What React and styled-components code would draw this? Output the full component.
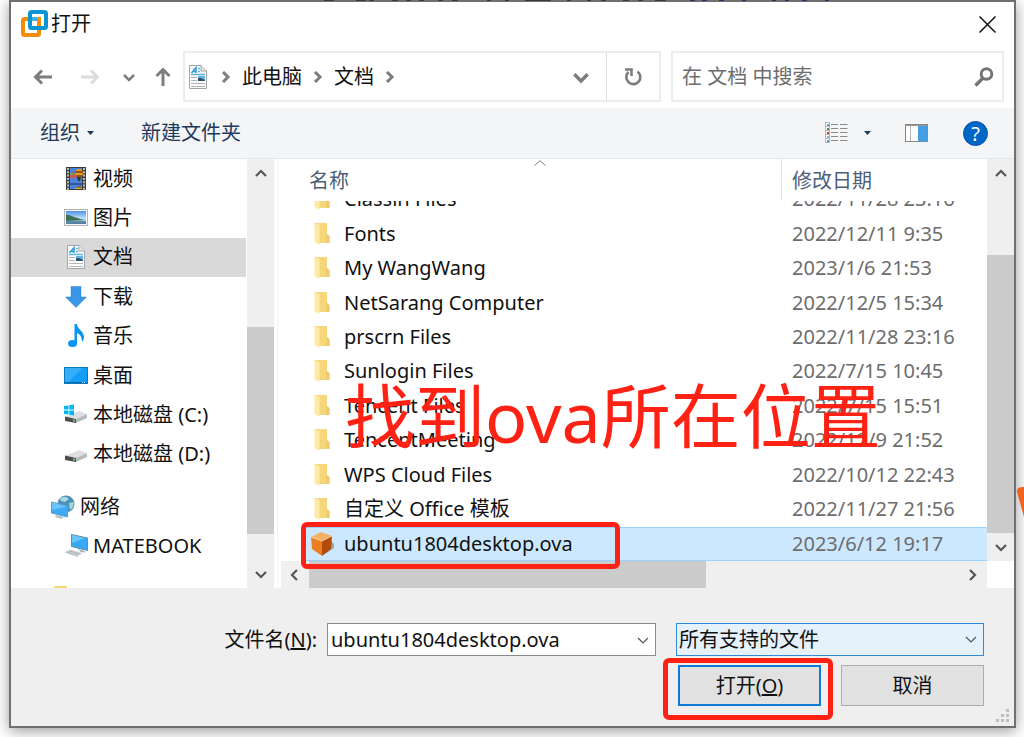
import React, { useState } from 'react'
import styled, { createGlobalStyle, css } from 'styled-components'

const GlobalStyle = createGlobalStyle`
  * {
    box-sizing: border-box;
  }
  body {
    margin: 0;
    background: #fff;
    color: #111;
    font-family: 'Noto Sans', 'Noto Sans CJK SC', sans-serif;
    font-size: 20px;
    line-height: 28px;
  }
  button, input, select {
    font: inherit;
    color: inherit;
  }
  button {
    padding: 0;
    border: 0;
    background: none;
    cursor: pointer;
  }
  svg {
    display: block;
    flex: none;
  }
`

const Page = styled.div`
  position: relative;
  display: flex;
  min-height: 100vh;
  padding: 0 8px 9px 9px;
  overflow: hidden;
`

const EdgeMark = styled.svg`
  position: absolute;
  right: 0;
  top: 486px;
`

const TopMarks = styled.svg`
  position: absolute;
  left: 310px;
  top: 0;
`

const Dialog = styled.main`
  flex: 1;
  display: flex;
  flex-direction: column;
  min-width: 0;
  border: 2px solid #707070;
  background: #fff;
  box-shadow: 0 3px 14px rgba(0, 0, 0, 0.4);
`

const TitleBar = styled.header`
  display: flex;
  align-items: center;
  gap: 3px;
  height: 44px;
  padding: 0 18px 0 10px;
`

const Title = styled.h1`
  flex: 1;
  margin: 0;
  font-size: 20px;
  font-weight: 400;
`

const NavBar = styled.div`
  display: flex;
  align-items: center;
  height: 62px;
  padding: 5px 10px 6px 0;
`

const NavButtons = styled.nav`
  display: flex;
  align-items: center;
  width: 172px;
  padding-left: 22px;
`

const NavButton = styled.button`
  margin-left: ${props => props.$before || 0}px;
  color: ${props => (props.disabled ? '#dcdcdc' : '#7d7d7d')};
`

const AddressBar = styled.div`
  flex: 1;
  display: flex;
  align-items: center;
  min-width: 0;
  height: 51px;
  border: 2px solid #ececec;
`

const Crumbs = styled.div`
  flex: 1;
  display: flex;
  align-items: center;
  padding: 0 17px 0 1px;
  color: #7d7d7d;
  > :first-child {
    margin-right: 10px;
  }
`

const Crumb = styled.button`
  margin: 0 10px;
  color: #111;
`

const Spacer = styled.span`
  flex: 1;
`

const Refresh = styled.button`
  display: flex;
  align-items: center;
  justify-content: center;
  width: 53px;
  height: 47px;
  border-left: 1px solid #dedede;
  color: #7d7d7d;
`

const SearchBox = styled.label`
  flex: 0 1 333px;
  display: flex;
  align-items: center;
  min-width: 0;
  height: 51px;
  margin-left: 10px;
  padding: 0 8px 0 9px;
  border: 2px solid #ececec;
  color: #747474;
  input {
    flex: 1;
    min-width: 0;
    padding: 0;
    border: 0;
    outline: 0;
    background: none;
  }
  input::placeholder {
    color: #6d6d6d;
    opacity: 1;
  }
`

const Toolbar = styled.div`
  display: flex;
  align-items: center;
  height: 51px;
  padding: 0 26px 0 29px;
  border-bottom: 1px solid #e4e8ea;
  background: #f4f5f7;
  color: #1e395b;
`

const ToolButton = styled.button`
  display: flex;
  align-items: center;
  gap: ${props => props.$gap || 0}px;
  margin-left: ${props => props.$before || 0}px;
`

const Body = styled.div`
  flex: 1;
  display: flex;
  min-height: 0;
`

const Tree = styled.nav`
  display: flex;
  flex-direction: column;
  width: 236px;
  overflow: hidden;
`

const TreeGroup = styled.ul`
  display: grid;
  grid-auto-rows: 1fr;
  flex: none;
  height: ${props => props.$height}px;
  margin: 0 0 13px;
  padding: 0;
  list-style: none;
`

const TreeItem = styled.li`
  display: flex;
  margin-right: 1px;
  background: ${props => (props.$selected ? '#d9d9d9' : 'transparent')};
`

const TreeLink = styled.a`
  flex: 1;
  display: flex;
  align-items: center;
  gap: 5px;
  padding-left: ${props => (props.$level === 1 ? 40 : 53)}px;
  color: inherit;
  text-decoration: none;
`

const TreeFolder = styled.div`
  flex: 1;
  width: 13px;
  min-height: 0;
  margin: 7px 0 0 43px;
  background: #f5d77b;
`

const ScrollBar = styled.div`
  display: flex;
  flex: none;
  background: #efefef;
  color: #555;
  ${props =>
    props.$horizontal
      ? css`
          height: 27px;
        `
      : css`
          flex-direction: column;
          width: 27px;
        `}
`

const ScrollArrow = styled.button`
  display: flex;
  align-items: center;
  justify-content: center;
  flex: none;
  width: 28px;
  height: 28px;
`

const ScrollGap = styled.div`
  flex: ${props => props.$size};
`

const ScrollThumb = styled.div`
  flex: ${props => props.$size};
  background: #cbcbcb;
`

const Splitter = styled.div`
  width: 7px;
  border-left: 3px solid #fff;
  background: linear-gradient(to right, #f5f5f5 1px, #fff 1px);
`

const Listing = styled.section`
  position: relative;
  flex: 1;
  display: flex;
  flex-direction: column;
  min-width: 0;
`

const ListArea = styled.div`
  flex: 1;
  display: flex;
  min-height: 0;
`

const Files = styled.table`
  flex: 1;
  display: block;
  min-width: 0;
  margin-left: 22px;
`

const FilesHead = styled.thead`
  position: relative;
  z-index: 1;
  display: block;
  background: #fff;
  color: #4c607a;
`

// the first row is scrolled half under the header
const FilesBody = styled.tbody`
  display: grid;
  grid-auto-rows: 1fr;
  height: 379px;
  margin-top: -19px;
`

const rowColumns = css`
  display: grid;
  grid-template-columns: 1fr 206px;
`

const HeadRow = styled.tr`
  ${rowColumns}
  height: 42px;
`

const HeadCell = styled.th`
  position: relative;
  padding: 8px 0 0 ${props => (props.$divided ? 10 : 6)}px;
  border-left: ${props => (props.$divided ? '1px solid #e5e5e5' : '0')};
  font-weight: 400;
  text-align: left;
`

const SortMark = styled.svg`
  position: absolute;
  left: calc(50% - 8px);
  top: 1px;
`

const FileRow = styled.tr`
  ${rowColumns}
  position: relative;
  align-items: center;
  ${props =>
    props.$selected &&
    css`
      background: #cce8ff;
      box-shadow: inset 0 1px #99d1ff, inset 0 -1px #99d1ff;
    `}
`

const NameCell = styled.td`
  display: flex;
  align-items: center;
  gap: 10px;
  padding: 0 0 0 7px;
`

const DateCell = styled.td`
  padding: 0 0 0 11px;
  color: #6d6d6d;
`

const Corner = styled.div`
  width: 27px;
  background: #fff;
`

const ScrollRow = styled.div`
  display: flex;
  height: 27px;
  > :first-child {
    flex: 1;
  }
`

const Note = styled.p`
  position: absolute;
  z-index: 2;
  left: 64px;
  top: 207px;
  margin: 0;
  color: #ff2113;
  font-size: 70px;
  line-height: 100px;
  white-space: nowrap;
  pointer-events: none;
`

const Marker = styled.span`
  position: absolute;
  z-index: 2;
  top: ${props => props.$top}px;
  left: ${props => props.$left}px;
  width: ${props => props.$width}px;
  height: ${props => props.$height}px;
  border: 5px solid #ff2113;
  border-radius: 6px;
  pointer-events: none;
`

const Footer = styled.form`
  position: relative;
  height: 138px;
  padding: 35px 30px 0 0;
  background: #efefef;
`

const Fields = styled.div`
  display: flex;
  align-items: center;
  justify-content: flex-end;
`

const FieldLabel = styled.label`
  margin-right: 10px;
`

const Combo = styled.div`
  display: flex;
  align-items: center;
  width: 329px;
  height: 33px;
  margin-right: 20px;
  padding: 0 6px 0 3px;
  border: 1px solid #8c8c8c;
  background: #fff;
  input {
    flex: 1;
    min-width: 0;
    padding: 0;
    border: 0;
    outline: 0;
    background: none;
  }
  button {
    color: #555;
  }
`

const SelectWrap = styled.div`
  position: relative;
  width: 308px;
  height: 33px;
  svg {
    position: absolute;
    right: 7px;
    top: 10px;
    color: #555;
    pointer-events: none;
  }
`

const Select = styled.select`
  width: 100%;
  height: 33px;
  padding: 0 24px 0 2px;
  border: 1px solid #2f8ad8;
  border-radius: 0;
  outline: 0;
  background: #e5f1fb;
  appearance: none;
`

const Actions = styled.div`
  display: flex;
  justify-content: flex-end;
  gap: 20px;
  margin-top: 9px;
`

const ActionButton = styled.button`
  position: relative;
  width: 143px;
  height: 41px;
  border: ${props => (props.$primary ? '2px solid #0f7ad6' : '1px solid #adadad')};
  background: #e1e1e1;
`

const Grip = styled.svg`
  position: absolute;
  right: 4px;
  bottom: 3px;
`

const HelpBadge = styled.span`
  display: block;
  width: 25px;
  height: 25px;
  border: 1px solid #07519c;
  border-radius: 50%;
  background: #0067c8;
  color: #fff;
  line-height: 23px;
  text-align: center;
`

const chevrons = {
  up: 'M1 7 L6 2 L11 7',
  down: 'M1 2 L6 7 L11 2',
  left: 'M8 1 L3 6 L8 11',
  right: 'M3 1 L8 6 L3 11',
}

const Chevron = ({ dir, size = 12, weight = 2 }) => (
  <svg
    width={size}
    height={size}
    viewBox={dir === 'up' || dir === 'down' ? '0 -2 12 12' : '0 0 12 12'}
    fill="none"
    stroke="currentColor"
    strokeWidth={weight}
    aria-hidden="true"
  >
    <path d={chevrons[dir]} />
  </svg>
)

const Caret = () => (
  <svg width="7" height="4" viewBox="0 0 7 4" aria-hidden="true">
    <path d="M0 0H7L3.5 4Z" fill="#1e395b" />
  </svg>
)

const Arrow = ({ rotate = 0 }) => (
  <svg width="20" height="20" viewBox="0 0 20 20" fill="none" stroke="currentColor" strokeWidth="3" aria-hidden="true">
    <g transform={`rotate(${rotate} 10 10)`}>
      <path d="M19 10H3M9 3.5L2.5 10L9 16.5" />
    </g>
  </svg>
)

const AppLogo = () => (
  <svg width="27" height="28" viewBox="0 0 27 28" fill="none" strokeWidth="4" aria-hidden="true">
    <rect x="2" y="9" width="16" height="16" rx="1.5" stroke="#f48c06" />
    <rect x="9" y="2" width="16" height="16" rx="1.5" stroke="#0c95d3" />
    <path d="M11 9h7v5" stroke="#f48c06" />
    <path d="M9 5v11" stroke="#0c95d3" />
    <path d="M11 9h5" stroke="#3cb1e2" />
  </svg>
)

const DocIcon = () => (
  <svg width="24" height="24" viewBox="0 0 24 24" aria-hidden="true">
    <path d="M3.5 .5H15L20.5 6V23.5H3.5Z" fill="#fbfbfb" stroke="#a3a5a6" />
    <path d="M15 .5V6H20.5" fill="#e3e5e6" stroke="#a3a5a6" />
    <path d="M5.500 8L10 2.500V8M7.500 6.500H10" fill="none" stroke="#2f9bd6" strokeWidth="1.500" />
    <path d="M12 3.5H14M12 6.500H14M5 9.500H19" stroke="#5bb5e4" strokeWidth="1.500" />
    <path d="M5 12.500H11M5 15.500H11M5 18.500H19M5 21.500H19" stroke="#b2b5b7" />
    <rect x="12" y="11" width="7" height="5" fill="#64b2ea" />
    <path d="M12 16V13L15 13L19 15V16Z" fill="#2f5365" />
  </svg>
)

const VideoIcon = () => (
  <svg width="24" height="24" viewBox="0 0 24 24" aria-hidden="true">
    <rect x="2" y="0" width="20" height="23" fill="#3d3d3d" />
    <rect x="6" y="1" width="12" height="21" fill="#4b83dc" />
    <path d="M4 1V23M20 1V23" stroke="#e6e6e6" strokeWidth="1.5" strokeDasharray="2 1.3" />
    <path d="M6 6l3-1 3 3-1 3H6Z" fill="#d4574b" />
    <path d="M6 7h3" stroke="#55b159" strokeWidth="2" />
    <ellipse cx="15" cy="6" rx="4" ry="4" fill="#d7a31c" />
    <path d="M11 5h8M12 9h6" stroke="#9b2a20" strokeWidth="1.5" />
    <path d="M13 10h4l-1 4h-2Z" fill="#2e3c28" />
    <path d="M6 17H18" stroke="#1b2f57" />
    <path d="M11 22a4 4 0 0 1 7 0Z" fill="#e2b31d" />
    <path d="M13 20h4" stroke="#9b2a20" />
  </svg>
)

const PictureIcon = () => (
  <svg width="24" height="24" viewBox="0 0 24 24" aria-hidden="true">
    <defs>
      <linearGradient id="sky" x2="0" y2="1">
        <stop offset="0" stopColor="#4f93e6" />
        <stop offset=".6" stopColor="#c6e5f7" />
        <stop offset="1" stopColor="#5b93bb" />
      </linearGradient>
    </defs>
    <rect x=".5" y="3.5" width="23" height="16" fill="#f5f5f5" stroke="#b4b4b4" />
    <rect x="2" y="5" width="20" height="13" fill="url(#sky)" />
    <path d="M2 9C6 8 9 12 21 14L2 15Z" fill="#3f6f54" />
    <path d="M2 15H22V18H2Z" fill="#426f8d" opacity=".6" />
  </svg>
)

const DownloadIcon = () => (
  <svg width="24" height="24" viewBox="0 0 24 24" aria-hidden="true">
    <path d="M7 1.5H17V12H22.5L12 22.5L1.5 12H7Z" fill="#3a97e8" stroke="#2d83d0" strokeWidth=".5" />
  </svg>
)

const MusicIcon = () => (
  <svg width="24" height="24" viewBox="0 0 24 24" aria-hidden="true">
    <ellipse cx="8.5" cy="19.5" rx="4.5" ry="3.5" fill="#0a97f2" />
    <path d="M10.5 0H13C13 5 20 7 20 13C20 15 19 17 18 18C18 13 16 10 13 9V19H10.5Z" fill="#0a97f2" />
  </svg>
)

const DesktopIcon = () => (
  <svg width="24" height="24" viewBox="0 0 24 24" aria-hidden="true">
    <rect x=".5" y="3.5" width="23" height="16" fill="#149df7" stroke="#0879bd" />
    <path d="M1 4H18L5 18H1Z" fill="#37acf9" />
    <path d="M1 18.5H23" stroke="#0a6ba8" />
    <path d="M18 18.5H22" stroke="#d5ebf8" strokeDasharray="1 1" />
  </svg>
)

const DiskIcon = ({ system }) => (
  <svg width="24" height="24" viewBox="0 0 24 24" aria-hidden="true">
    <path d="M1 14L15 8L23 11L12 16Z" fill="#dedfe2" />
    <path d="M12 16L23 11V15L12 20Z" fill="#b9babd" />
    <path d="M1 13.5L12 16V20L1 18Z" fill="#4c4d50" />
    <path d="M9 17.5h2" stroke="#5de15d" strokeWidth="2" />
    {system && (
      <path
        d="M0 3L4.5 2.4V6.6H0ZM5.3 2.3L10 1.6V6.6H5.3ZM0 7.4H4.5V11.6L0 11ZM5.3 7.4H10V12.4L5.3 11.7Z"
        fill="#00b5f0"
      />
    )}
  </svg>
)

const NetworkIcon = () => (
  <svg width="24" height="24" viewBox="0 0 24 24" aria-hidden="true">
    <circle cx="15" cy="9" r="8.5" fill="#4c91b4" />
    <path d="M9 4C12 0 17 2 18 4L14 7L10 6ZM18 8L23 7L22 12L19 15Z" fill="#a6d6e6" />
    <path d="M.5 7L16.5 11V22L.5 18Z" fill="#3daaf5" stroke="#5f9fc4" />
    <path d="M1 7.5L16 11.5L1 15Z" fill="#6bc4fb" />
    <path d="M5 20L13 22L10 24L4 22Z" fill="#b8c0c5" />
  </svg>
)

const ComputerIcon = () => (
  <svg width="24" height="24" viewBox="0 0 24 24" aria-hidden="true">
    <path d="M7.5 .5L23.5 4V16.5L7.5 12.5Z" fill="#36a8f5" stroke="#6a8ca3" />
    <path d="M8 1L21 4L8 9Z" fill="#6bc3fa" />
    <path d="M14 15L20 17L22 18.5L17 18Z" fill="#a1a8ad" />
    <path d="M6 15.5L19 19L13 23L0 18.5Z" fill="#d3d8db" />
    <path d="M3 18L14 21.5M5 16.8L16 20" stroke="#98a0a5" strokeDasharray="1.5 .7" />
  </svg>
)

const FolderIcon = () => (
  <svg width="24" height="24" viewBox="0 0 24 24" aria-hidden="true">
    <path d="M4.5 1H17V12L19.5 14V21H8Z" fill="#f6d67a" />
    <path d="M16 12L19.5 14V21H16Z" fill="#eecb6c" />
    <path d="M4.5 1L9.5 3V23L4.5 20Z" fill="#ffe9a6" />
  </svg>
)

const BoxIcon = () => (
  <svg width="24" height="24" viewBox="0 0 24 24" aria-hidden="true">
    <path d="M15 22L24 16V12L20 8Z" fill="#7b746d" opacity=".6" />
    <path d="M1 5L11 0L22 4L12 9Z" fill="#f5b063" />
    <path d="M1 5L12 9V24L2 17Z" fill="#eb7f1f" />
    <path d="M12 9L22 4L21 17L12 24Z" fill="#b44b0d" />
    <path d="M1 5L12 9L22 4" stroke="#ffd9a4" strokeWidth=".8" fill="none" />
  </svg>
)

const RefreshIcon = () => (
  <svg width="18" height="20" viewBox="0 0 18 20" fill="none" stroke="currentColor" aria-hidden="true">
    <path d="M13.5 4.5A7 7 0 1 1 4.500 5" strokeWidth="2.6" />
    <path d="M1 2.5H7.500V9" strokeWidth="2.6" />
  </svg>
)

const SearchIcon = () => (
  <svg width="20" height="20" viewBox="0 0 20 20" fill="none" stroke="currentColor" aria-hidden="true">
    <circle cx="12.5" cy="7" r="5.3" strokeWidth="3" />
    <path d="M9 11L1.5 18.5" strokeWidth="3.4" />
  </svg>
)

const CloseIcon = () => (
  <svg width="17" height="17" viewBox="0 0 17 17" stroke="#111" strokeWidth="1.5" aria-hidden="true">
    <path d="M.5 .5L16.5 16.5M16.5 .5L.5 16.5" />
  </svg>
)

const DetailsIcon = () => (
  <svg width="23" height="22" viewBox="0 0 23 22" aria-hidden="true">
    {['#4f9fd6', '#5b8a3c', '#d33a2c', '#8fb8d0', '#3d9bd8'].map((color, i) => (
      <g key={i} transform={`translate(0 ${i * 4})`}>
        <rect x=".5" y=".5" width="4" height="4" fill="#fff" stroke="#b6b6b6" />
        <rect x="2" y="2" width="2" height="2" fill={color} />
        <path d="M6 2.5H13M15 2.5H22.5" stroke="#8b8b8b" />
      </g>
    ))}
  </svg>
)

const PreviewIcon = () => (
  <svg width="23" height="18" viewBox="0 0 23 18" aria-hidden="true">
    <rect x=".5" y=".5" width="22" height="17" fill="#fff" stroke="#858585" />
    <path d="M1 1.5H22" stroke="#999" />
    <path d="M5.5 2V17" stroke="#b5b5b5" />
    <rect x="13" y="2" width="9.5" height="15.5" fill="#459fe3" />
  </svg>
)

const drives = [
  { name: '视频', icon: <VideoIcon /> },
  { name: '图片', icon: <PictureIcon /> },
  { name: '文档', icon: <DocIcon /> },
  { name: '下载', icon: <DownloadIcon /> },
  { name: '音乐', icon: <MusicIcon /> },
  { name: '桌面', icon: <DesktopIcon /> },
  { name: '本地磁盘 (C:)', icon: <DiskIcon system /> },
  { name: '本地磁盘 (D:)', icon: <DiskIcon /> },
]

const network = [
  { name: '网络', icon: <NetworkIcon />, level: 1 },
  { name: 'MATEBOOK', icon: <ComputerIcon /> },
]

const files = [
  { name: 'Classin Files', date: '2022/11/28 23:16' },
  { name: 'Fonts', date: '2022/12/11 9:35' },
  { name: 'My WangWang', date: '2023/1/6 21:53' },
  { name: 'NetSarang Computer', date: '2022/12/5 15:34' },
  { name: 'prscrn Files', date: '2022/11/28 23:16' },
  { name: 'Sunlogin Files', date: '2022/7/15 10:45' },
  { name: 'Tencent Files', date: '2022/7/15 15:51' },
  { name: 'TencentMeeting', date: '2022/12/9 21:52' },
  { name: 'WPS Cloud Files', date: '2022/10/12 22:43' },
  { name: '自定义 Office 模板', date: '2022/11/27 21:56' },
  { name: 'ubuntu1804desktop.ova', date: '2023/6/12 19:17', image: true },
]

const TreeList = ({ items, height, selected, onSelect }) => (
  <TreeGroup $height={height}>
    {items.map(item => (
      <TreeItem key={item.name} $selected={item.name === selected}>
        <TreeLink
          href="#"
          $level={item.level}
          onClick={e => {
            e.preventDefault()
            onSelect(item.name)
          }}
        >
          {item.icon}
          {item.name}
        </TreeLink>
      </TreeItem>
    ))}
  </TreeGroup>
)

const Scroll = ({ horizontal, before, thumb, after }) => (
  <ScrollBar $horizontal={horizontal}>
    <ScrollArrow type="button" aria-label={horizontal ? '向左' : '向上'}>
      <Chevron dir={horizontal ? 'left' : 'up'} weight={2.2} />
    </ScrollArrow>
    <ScrollGap $size={before} />
    <ScrollThumb $size={thumb} />
    <ScrollGap $size={after} />
    <ScrollArrow type="button" aria-label={horizontal ? '向右' : '向下'}>
      <Chevron dir={horizontal ? 'right' : 'down'} weight={2.2} />
    </ScrollArrow>
  </ScrollBar>
)

const App = () => {
  const [folder, setFolder] = useState('文档')
  const [fileName, setFileName] = useState('ubuntu1804desktop.ova')

  return (
    <Page>
      <GlobalStyle />
      <Dialog>
        <TitleBar>
          <AppLogo />
          <Title>打开</Title>
          <button type="button" aria-label="关闭">
            <CloseIcon />
          </button>
        </TitleBar>

        <NavBar>
          <NavButtons>
            <NavButton type="button" aria-label="后退">
              <Arrow />
            </NavButton>
            <NavButton type="button" $before={27} disabled aria-label="前进">
              <Arrow rotate={180} />
            </NavButton>
            <NavButton type="button" $before={23} aria-label="最近位置">
              <Chevron dir="down" weight={2.6} />
            </NavButton>
            <NavButton type="button" $before={18} aria-label="上移">
              <Arrow rotate={90} />
            </NavButton>
          </NavButtons>
          <AddressBar>
            <Crumbs>
              <DocIcon />
              <Chevron dir="right" weight={3} />
              <Crumb type="button">此电脑</Crumb>
              <Chevron dir="right" weight={3} />
              <Crumb type="button">文档</Crumb>
              <Chevron dir="right" weight={3} />
              <Spacer />
              <Chevron dir="down" size={16} weight={2.6} />
            </Crumbs>
            <Refresh type="button" aria-label="刷新">
              <RefreshIcon />
            </Refresh>
          </AddressBar>
          <SearchBox>
            <input type="text" placeholder="在 文档 中搜索" aria-label="搜索" />
            <SearchIcon />
          </SearchBox>
        </NavBar>

        <Toolbar>
          <ToolButton type="button" $gap={7}>
            组织
            <Caret />
          </ToolButton>
          <ToolButton type="button" $before={47}>
            新建文件夹
          </ToolButton>
          <Spacer />
          <ToolButton type="button" $gap={16} aria-label="更改视图">
            <DetailsIcon />
            <Caret />
          </ToolButton>
          <ToolButton type="button" $before={34} aria-label="预览窗格">
            <PreviewIcon />
          </ToolButton>
          <ToolButton type="button" $before={35} aria-label="帮助">
            <HelpBadge>?</HelpBadge>
          </ToolButton>
        </Toolbar>

        <Body>
          <Tree>
            <TreeList items={drives} height={315} selected={folder} onSelect={setFolder} />
            <TreeList items={network} height={79} selected={folder} onSelect={setFolder} />
            <TreeFolder />
          </Tree>
          <Scroll before={140} thumb={207} after={26} />
          <Splitter />
          <Listing>
            <ListArea>
              <Files cellSpacing="0">
                <FilesHead>
                  <HeadRow>
                    <HeadCell scope="col">
                      名称
                      <SortMark width="12" height="6" viewBox="0 0 12 6" fill="none" stroke="#7d7d7d">
                        <path d="M.5 5.5L6 .7L11.5 5.5" />
                      </SortMark>
                    </HeadCell>
                    <HeadCell scope="col" $divided>
                      修改日期
                    </HeadCell>
                  </HeadRow>
                </FilesHead>
                <FilesBody>
                  {files.map(file => (
                    <FileRow key={file.name} $selected={file.image} onClick={() => setFileName(file.name)}>
                      <NameCell>
                        {file.image ? <BoxIcon /> : <FolderIcon />}
                        {file.name}
                        {file.image && <Marker $top={-5} $left={-2} $width={319} $height={47} />}
                      </NameCell>
                      <DateCell>{file.date}</DateCell>
                    </FileRow>
                  ))}
                </FilesBody>
              </Files>
              <Scroll before={68} thumb={279} after={0} />
            </ListArea>
            <ScrollRow>
              <Scroll horizontal before={0} thumb={396} after={253} />
              <Corner />
            </ScrollRow>
            <Note>找到ova所在位置</Note>
          </Listing>
        </Body>

        <Footer onSubmit={e => e.preventDefault()}>
          <Fields>
            <FieldLabel htmlFor="file-name">
              文件名(<u>N</u>):
            </FieldLabel>
            <Combo>
              <input id="file-name" type="text" value={fileName} onChange={e => setFileName(e.target.value)} />
              <button type="button" aria-label="最近的文件">
                <Chevron dir="down" weight={1.2} />
              </button>
            </Combo>
            <SelectWrap>
              <Select aria-label="文件类型">
                <option>所有支持的文件</option>
              </Select>
              <Chevron dir="down" weight={1.2} />
            </SelectWrap>
          </Fields>
          <Actions>
            <ActionButton type="submit" $primary>
              打开(<u>O</u>)
              <Marker $top={-9} $left={-17} $width={170} $height={62} />
            </ActionButton>
            <ActionButton type="button">取消</ActionButton>
          </Actions>
          <Grip width="14" height="14" viewBox="0 0 14 14" fill="#bdbdbd" aria-hidden="true">
            <path d="M10 0h3v3h-3ZM5 5h3v3h-3ZM10 5h3v3h-3ZM0 10h3v3h-3ZM5 10h3v3h-3ZM10 10h3v3h-3Z" />
          </Grip>
        </Footer>
      </Dialog>
      <TopMarks width="560" height="1" viewBox="0 0 560 1" aria-hidden="true">
        <path
          d="M14 0h10v1h-10ZM46 0h10v1h-10ZM59 0h5v1h-5ZM82 0h6v1h-6ZM96 0h5v1h-5ZM109 0h5v1h-5ZM128 0h5v1h-5ZM142 0h6v1h-6ZM177 0h4v1h-4ZM195 0h4v1h-4ZM215 0h26v1h-26ZM257 0h4v1h-4ZM277 0h4v1h-4ZM291 0h5v1h-5ZM313 0h6v1h-6ZM328 0h5v1h-5ZM345 0h11v1h-11Z"
          fill="#3c3838"
        />
        <path
          d="M380 0h5v1h-5ZM392 0h5v1h-5ZM409 0h5v1h-5ZM432 0h4v1h-4ZM462 0h4v1h-4ZM475 0h4v1h-4ZM492 0h5v1h-5ZM515 0h4v1h-4Z"
          fill="#3d2a66"
        />
      </TopMarks>
      <EdgeMark width="7" height="32" viewBox="0 0 7 32" aria-hidden="true">
        <path d="M0 5C0 2 2 1 7 1V31L0 6Z" fill="#f26322" />
      </EdgeMark>
    </Page>
  )
}

export default App
